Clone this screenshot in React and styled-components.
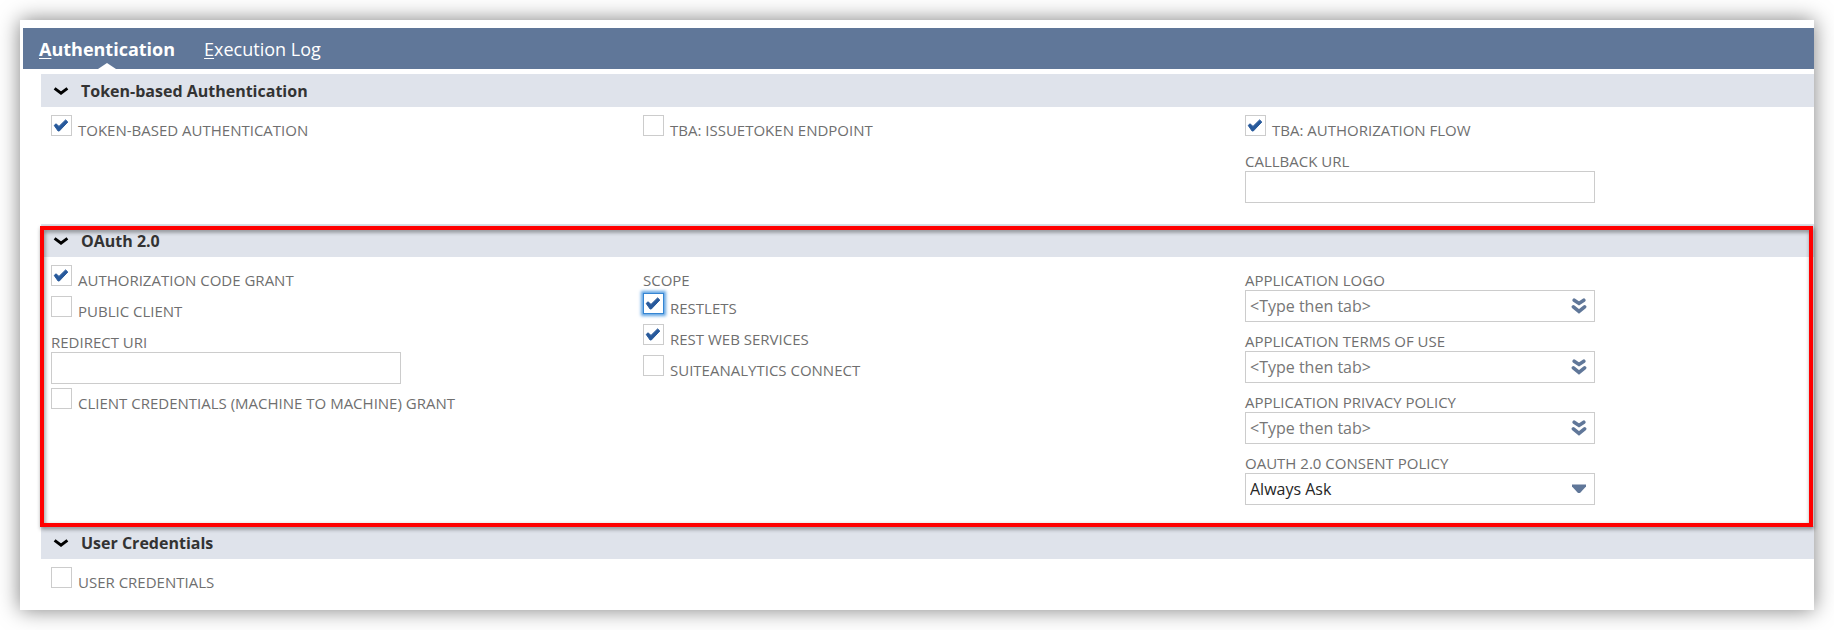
import React, { useId, useState } from "react";
import styled, { createGlobalStyle, css } from "styled-components";

const GlobalStyle = createGlobalStyle`
  *, *::before, *::after { box-sizing: border-box; }
  body {
    margin: 0;
    background: #fff;
    color: #6f6f6f;
    font: 15px/20px "Open Sans", "Noto Sans", sans-serif;
  }
  button, input, select { font: inherit; color: inherit; }
`;

const Panel = styled.main`
  margin: 20px;
  padding-top: 8px;
  background: #fff;
  box-shadow: 0 0 20px rgba(0, 0, 0, 0.5);
`;

const TabBar = styled.div`
  display: flex;
  gap: 29px;
  height: 41px;
  margin: 0 0 5px 3px;
  padding: 0 16px;
  background: #607799;
`;

const Tab = styled.button`
  position: relative;
  padding: 0;
  border: 0;
  background: none;
  color: #fff;
  font-size: 18px;
  line-height: 24px;
  font-weight: ${(p) => (p.$active ? 700 : 400)};
  cursor: pointer;

  ${(p) =>
    p.$active &&
    css`
      &::after {
        content: "";
        position: absolute;
        left: calc(50% - 9px);
        bottom: 0;
        border: solid transparent;
        border-width: 0 9px 6px;
        border-bottom-color: #fff;
      }
    `}
`;

const AccessKey = styled.span`
  text-decoration: underline;
  text-underline-offset: 2px;
`;

const SectionBox = styled.section`
  position: relative;
  margin-left: 21px;
`;

const Highlight = styled.div`
  position: absolute;
  z-index: 1;
  inset: 2px 1px -1px -1px;
  border: 4px solid #f00;
  filter: drop-shadow(1px 2px 2px rgba(0, 0, 0, 0.45));
  pointer-events: none;
`;

const SectionTitle = styled.h2`
  margin: 0;
  background: #dfe3eb;
  font-size: 16px;
`;

const SectionToggle = styled.button`
  display: flex;
  align-items: center;
  gap: 12px;
  width: 100%;
  height: 33px;
  padding: 0 12px;
  border: 0;
  background: none;
  color: #333;
  font-weight: 700;
  text-align: left;
  cursor: pointer;
`;

const Columns = styled.div`
  display: grid;
  grid-template-columns: 592fr 602fr 569fr;
  padding: 8px 0 12px 10px;
`;

const Column = styled.div`
  min-width: 0;
`;

const CheckRow = styled.div`
  display: flex;
  align-items: flex-start;
  gap: 6px;
  height: 31px;
`;

const CheckControl = styled.span`
  position: relative;
  flex: none;
  width: 21px;
  height: 21px;

  svg {
    position: absolute;
    inset: 0;
    pointer-events: none;
  }
`;

const CheckInput = styled.input`
  display: block;
  appearance: none;
  width: 21px;
  height: 21px;
  margin: 0;
  border: 1px solid ${(p) => (p.$focused ? "#3585d3" : "#ccc")};
  background: #fff;
  box-shadow: ${(p) => (p.$focused ? "0 0 3px 2px #5fa3e3" : "none")};
`;

const CheckLabel = styled.label`
  padding-top: 5px;
  white-space: nowrap;
`;

const FieldBox = styled.div`
  width: 350px;
  max-width: 100%;
  margin-bottom: 4px;

  &:last-child { margin-bottom: 9px; }
`;

const FieldLabel = styled.label`
  display: block;
  height: 25px;
  padding-top: 5px;
`;

const Group = styled.fieldset`
  margin: 0;
  padding: 0;
  border: 0;
`;

const GroupLabel = styled.legend`
  height: 28px;
  padding: 5px 0 0;
`;

const Control = styled.div`
  position: relative;

  > svg {
    position: absolute;
    top: 8px;
    right: 8px;
    pointer-events: none;
  }
`;

const fieldStyle = css`
  display: block;
  appearance: none;
  width: 100%;
  height: 32px;
  padding: 0 30px 0 4px;
  border: 1px solid #ccc;
  border-radius: 0;
  background: #fff;
  font-size: 16px;
`;

const TextInput = styled.input`
  ${fieldStyle}
  &::placeholder { color: #777; opacity: 1; }
`;

const SelectInput = styled.select`
  ${fieldStyle}
  color: #262626;
`;

const PickButton = styled.button`
  position: absolute;
  top: 8px;
  right: 8px;
  width: 16px;
  height: 16px;
  padding: 0;
  border: 0;
  background: none;
  cursor: pointer;

  svg { display: block; }
`;

function Section({ title, highlighted, children }) {
  const [open, setOpen] = useState(true);
  return (
    <SectionBox>
      <SectionTitle>
        <SectionToggle aria-expanded={open} onClick={() => setOpen(!open)}>
          <svg width="16" height="12" viewBox="0 0 16 12" fill="none" stroke="#000" strokeWidth="3">
            <path d="M1.6 3.4 8 8.2 14.4 3.4" />
          </svg>
          {title}
        </SectionToggle>
      </SectionTitle>
      {open && <Columns>{children}</Columns>}
      {highlighted && <Highlight />}
    </SectionBox>
  );
}

function Check({ label, initial = false, focused }) {
  const id = useId();
  const [checked, setChecked] = useState(initial);
  return (
    <CheckRow>
      <CheckControl>
        <CheckInput
          id={id}
          type="checkbox"
          checked={checked}
          $focused={focused}
          onChange={(e) => setChecked(e.target.checked)}
        />
        {checked && (
          <svg width="21" height="21" viewBox="0 0 21 21" fill="#27599b" stroke="#27599b" strokeWidth="1" strokeLinejoin="round">
            <path d="M3.2 10.4 5 8.8 8 11.4 14.6 4.9 16.8 7 8.3 16 7.1 16Z" />
          </svg>
        )}
      </CheckControl>
      <CheckLabel htmlFor={id}>{label}</CheckLabel>
    </CheckRow>
  );
}

function TextField({ label }) {
  const id = useId();
  return (
    <FieldBox>
      <FieldLabel htmlFor={id}>{label}</FieldLabel>
      <TextInput id={id} type="text" />
    </FieldBox>
  );
}

function PickerField({ label }) {
  const id = useId();
  return (
    <FieldBox>
      <FieldLabel htmlFor={id}>{label}</FieldLabel>
      <Control>
        <TextInput id={id} type="text" placeholder="<Type then tab>" />
        <PickButton aria-label={`Choose ${label}`}>
          <svg
            width="16"
            height="16"
            viewBox="0 0 16 16"
            fill="none"
            stroke="#607799"
            strokeWidth="3.6"
            strokeLinecap="round"
          >
            <path d="M3.2 2.2 8 5.4 12.8 2.2M2.4 8.8 8 13.4 13.6 8.8" />
          </svg>
        </PickButton>
      </Control>
    </FieldBox>
  );
}

function SelectField({ label, options }) {
  const id = useId();
  return (
    <FieldBox>
      <FieldLabel htmlFor={id}>{label}</FieldLabel>
      <Control>
        <SelectInput id={id}>
          {options.map((o) => (
            <option key={o}>{o}</option>
          ))}
        </SelectInput>
        <svg width="16" height="16" viewBox="0 0 16 16" fill="#607799">
          <path d="M1 3.5H15V5.5L9 12H7L1 5.5Z" />
        </svg>
      </Control>
    </FieldBox>
  );
}

export default function App() {
  return (
    <>
      <GlobalStyle />
      <Panel>
        <TabBar role="tablist">
          <Tab role="tab" aria-selected="true" $active>
            <AccessKey>A</AccessKey>uthentication
          </Tab>
          <Tab role="tab" aria-selected="false">
            <AccessKey>E</AccessKey>xecution Log
          </Tab>
        </TabBar>

        <Section title="Token-based Authentication">
          <Column>
            <Check label="TOKEN-BASED AUTHENTICATION" initial />
          </Column>
          <Column>
            <Check label="TBA: ISSUETOKEN ENDPOINT" />
          </Column>
          <Column>
            <Check label="TBA: AUTHORIZATION FLOW" initial />
            <TextField label="CALLBACK URL" />
          </Column>
        </Section>

        <Section title="OAuth 2.0" highlighted>
          <Column>
            <Check label="AUTHORIZATION CODE GRANT" initial />
            <Check label="PUBLIC CLIENT" />
            <TextField label="REDIRECT URI" />
            <Check label="CLIENT CREDENTIALS (MACHINE TO MACHINE) GRANT" />
          </Column>
          <Column>
            <Group>
              <GroupLabel>SCOPE</GroupLabel>
              <Check label="RESTLETS" initial focused />
              <Check label="REST WEB SERVICES" initial />
              <Check label="SUITEANALYTICS CONNECT" />
            </Group>
          </Column>
          <Column>
            <PickerField label="APPLICATION LOGO" />
            <PickerField label="APPLICATION TERMS OF USE" />
            <PickerField label="APPLICATION PRIVACY POLICY" />
            <SelectField label="OAUTH 2.0 CONSENT POLICY" options={["Always Ask", "Never Ask", "Ask First Time"]} />
          </Column>
        </Section>

        <Section title="User Credentials">
          <Column>
            <Check label="USER CREDENTIALS" />
          </Column>
        </Section>
      </Panel>
    </>
  );
}
